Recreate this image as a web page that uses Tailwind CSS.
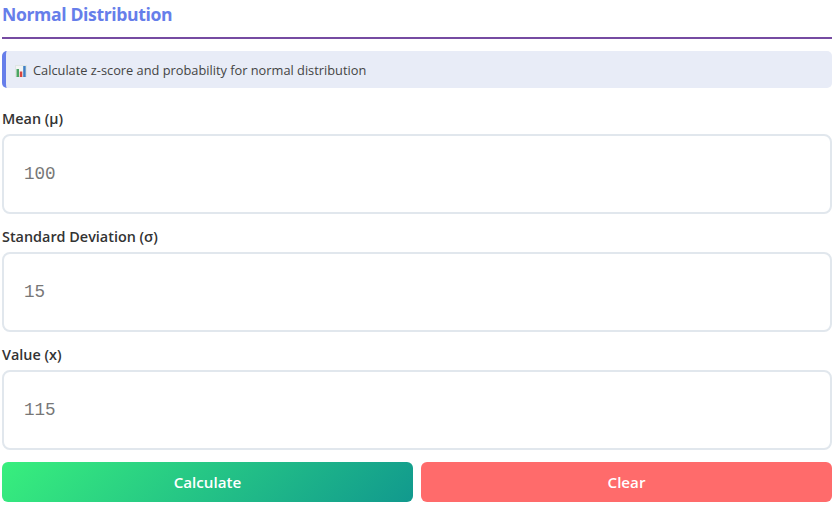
<!DOCTYPE html>
<html lang="en">
  <head>
    <meta charset="UTF-8" />
    <title>Normal Distribution</title>
    <script src="https://cdn.jsdelivr.net/npm/@tailwindcss/browser@4"></script>
  </head>
  <body class="bg-white font-['Open_Sans','Noto_Sans',sans-serif] text-[#333] overflow-hidden">
    <div class="w-[836px] h-[508px] pl-[2px] pr-[4px]">
      <!-- Heading -->
      <h2 class="h-[39px] pt-[2px] border-b-2 border-[#764ba2] text-[17.6px] tracking-[-0.37px] leading-[25px] font-bold text-[#667eea]">
        Normal Distribution
      </h2>

      <!-- Info -->
      <div class="mt-3 h-[37px] flex items-center gap-[6px] pl-[9px] pt-[2px] bg-[#e8ecf7] border-l-4 border-[#667eea] rounded-[5px] text-[12.8px] text-[#444]">
        <svg class="w-[12px] h-[12px] shrink-0" viewBox="0 0 12 12">
          <rect width="12" height="12" fill="#dfe5e5" />
          <rect x="1" y="1" width="10" height="10" fill="#f2f4f4" />
          <rect x="1.5" y="4" width="2.5" height="8" fill="#4aa564" />
          <rect x="4.8" y="6.5" width="2.5" height="5.5" fill="#d8453e" />
          <rect x="8.2" y="1" width="2.5" height="11" fill="#3f7fc4" />
        </svg>
        <span>Calculate z-score and probability for normal distribution</span>
      </div>

      <!-- Fields -->
      <div class="mt-[20px] flex flex-col gap-[12px]">
        <div>
          <label for="mean" class="block h-[26px] pt-[1px] text-[14.4px] leading-[20px] font-semibold text-[#333]">Mean (μ)</label>
          <input id="mean" value="100" class="block w-full h-[80px] px-5 bg-white border-2 border-[#e1e7ed] rounded-lg font-['Liberation_Mono','Courier_New',monospace] text-[17.6px] text-[#777] outline-none" />
        </div>
        <div>
          <label for="sd" class="block h-[26px] pt-[1px] text-[14.4px] leading-[20px] font-semibold text-[#333]">Standard Deviation (σ)</label>
          <input id="sd" value="15" class="block w-full h-[80px] px-5 bg-white border-2 border-[#e1e7ed] rounded-lg font-['Liberation_Mono','Courier_New',monospace] text-[17.6px] text-[#777] outline-none" />
        </div>
        <div>
          <label for="val" class="block h-[26px] pt-[1px] text-[14.4px] leading-[20px] font-semibold text-[#333]">Value (x)</label>
          <input id="val" value="115" class="block w-full h-[80px] px-5 bg-white border-2 border-[#e1e7ed] rounded-lg font-['Liberation_Mono','Courier_New',monospace] text-[17.6px] text-[#777] outline-none" />
        </div>
      </div>

      <!-- Buttons -->
      <div class="mt-[12px] grid grid-cols-2 gap-2">
        <button class="h-[40px] rounded-md bg-linear-[135deg] from-[#38ef7d] to-[#11998e] text-white text-[15.2px] font-semibold">Calculate</button>
        <button class="h-[40px] rounded-md bg-[#ff6b6b] text-white text-[15.2px] font-semibold">Clear</button>
      </div>
    </div>
  </body>
</html>
